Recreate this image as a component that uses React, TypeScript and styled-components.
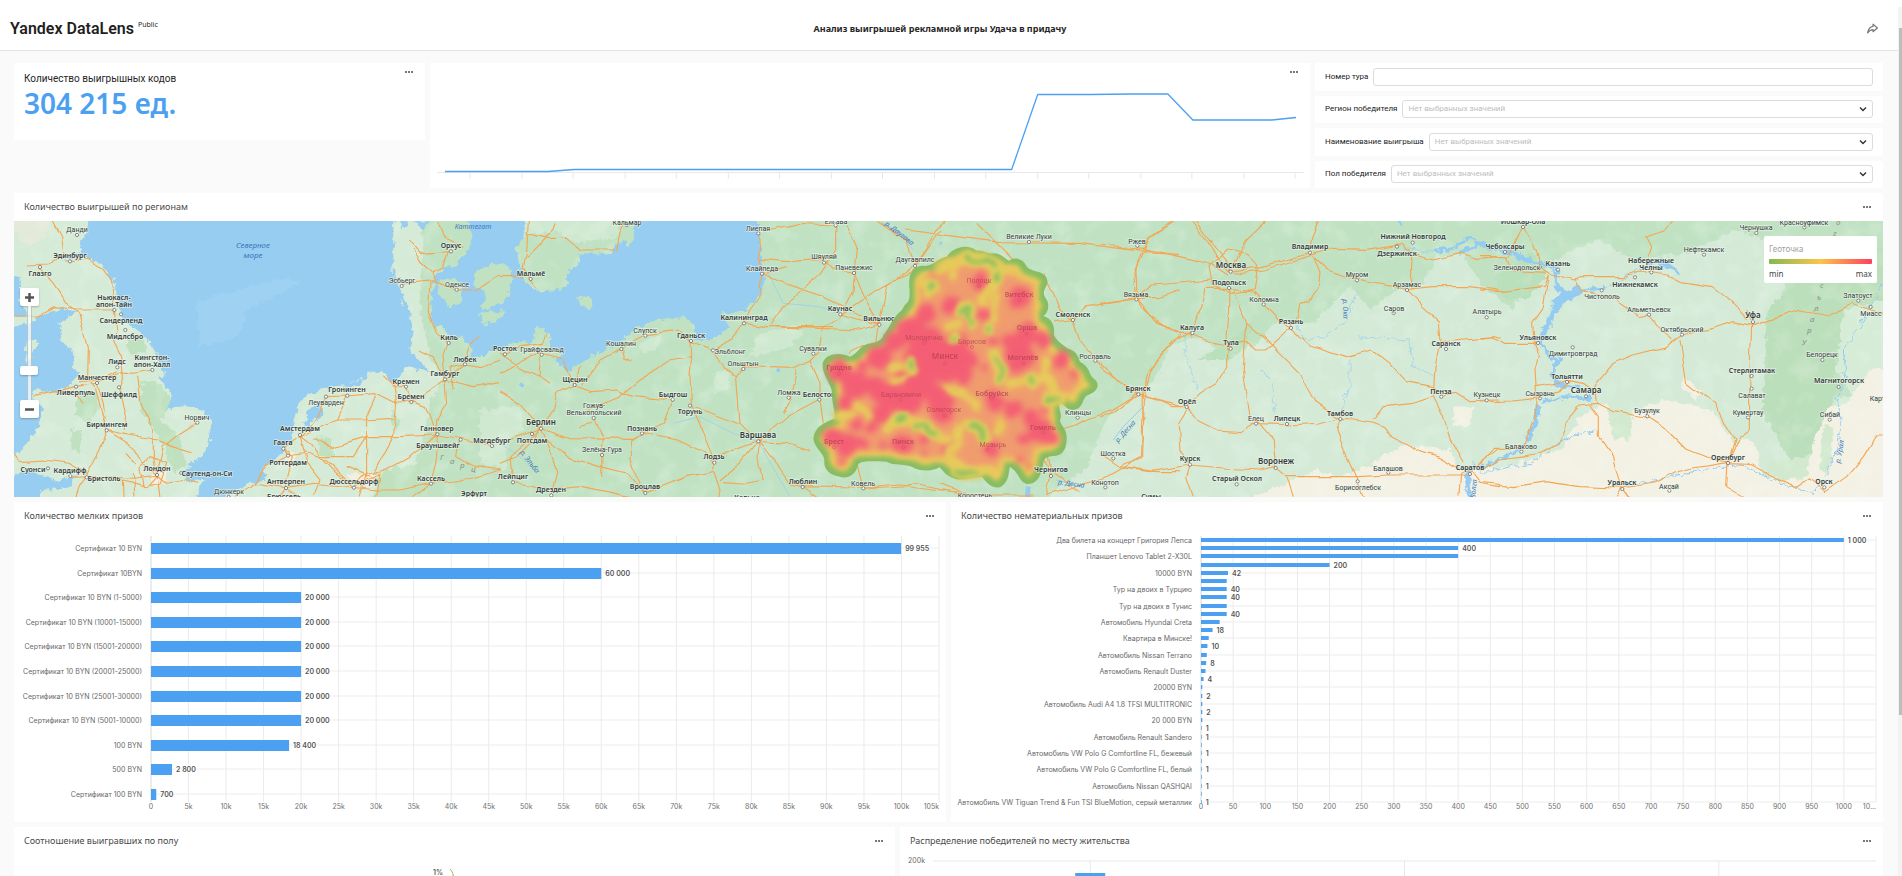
import React from "react";
import styled, { createGlobalStyle } from "styled-components";

const BLUE = "#4ba0f2";

const GlobalStyle = createGlobalStyle`
  *, *::before, *::after { box-sizing: border-box; }
  body { margin: 0; background: #fafafa; color: #333; font-family: "Noto Sans", sans-serif; }
`;

/* ---------- page frame ---------- */

const Page = styled.div`
  display: flex;
  height: 100vh;
  overflow: hidden;
`;

const Content = styled.div`
  flex: 1;
  min-width: 0;
`;

const Track = styled.div`
  width: 4px;
  padding: 28px 0 0 1px;
  background: linear-gradient(#fff 7px, #f3f3f3 7px);
`;

const Thumb = styled.div`
  height: 81%;
  background: #bdbdbd;
`;

const Header = styled.header`
  display: grid;
  grid-template-columns: 1fr auto 1fr;
  align-items: center;
  height: 51px;
  padding: 7px 16px 0 10px;
  background: #fff;
  border-bottom: 1px solid #e3e3e3;
`;

const Logo = styled.a`
  display: flex;
  gap: 4px;
  align-items: flex-start;
  color: #1f1f1f;
  font: 600 16px/20px Roboto, sans-serif;
  text-decoration: none;
`;

const LogoTag = styled.span`
  font: 400 7px/12px "Noto Sans", sans-serif;
`;

const PageTitle = styled.h1`
  margin: 0;
  padding-right: 12px;
  font-size: 9px;
  line-height: 12px;
  font-weight: 700;
  color: #262626;
`;

const IconButton = styled.button`
  display: grid;
  place-items: center;
  padding: 0;
  border: 0;
  background: none;
  color: #777;
  cursor: pointer;
`;

const ShareButton = styled(IconButton)`
  justify-self: end;
  width: 20px;
  height: 20px;
`;

const Board = styled.main`
  display: flex;
  flex-direction: column;
  gap: 5px;
  padding: 12px 15px 0 14px;
`;

const BoardRow = styled.div<{ $columns: string }>`
  display: grid;
  grid-template-columns: ${(p) => p.$columns};
  gap: 5px;
  align-items: start;
`;

const Card = styled.section`
  position: relative;
  min-width: 0;
  background: #fff;
`;

const CardHeader = styled.div`
  display: flex;
  align-items: center;
  justify-content: space-between;
  height: 28px;
  padding: 0 10px;
`;

const CardTitle = styled.h2`
  margin: 0;
  font-size: 9px;
  line-height: 12px;
  font-weight: 400;
  color: #4a4a4a;
`;

const MenuButton = styled(IconButton)`
  width: 12px;
  height: 12px;
`;

const CornerMenu = styled(MenuButton)`
  position: absolute;
  top: 3px;
  right: 10px;
`;

/* ---------- indicator and trend ---------- */

const Indicator = styled(Card)`
  height: 77px;
  padding: 10px;
`;

const IndicatorLabel = styled.div`
  font: 400 10px/12px Roboto, sans-serif;
  color: #262626;
`;

const IndicatorValue = styled.div`
  font-size: 28px;
  line-height: 36px;
  font-weight: 600;
  color: ${BLUE};
`;

const Trend = styled(Card)`
  height: 125px;
`;

const TrendPlot = styled.svg`
  display: block;
  width: 100%;
  height: 125px;
`;

/* ---------- filters ---------- */

const Filters = styled.form`
  display: flex;
  flex-direction: column;
  gap: 5px;
  height: 125px;
`;

const FilterRow = styled.div`
  display: flex;
  flex: 1;
  align-items: center;
  gap: 5px;
  padding: 0 10px;
  background: #fff;
`;

const FilterLabel = styled.label`
  font: 400 8px/12px Roboto, sans-serif;
  color: #222;
`;

const Field = styled.div`
  position: relative;
  display: flex;
  flex: 1;
`;

const TextInput = styled.input`
  width: 100%;
  height: 18px;
  padding: 0 5px;
  border: 1px solid #dcdcdc;
  border-radius: 3px;
  background: #fff;
  font: 400 8px/12px Roboto, sans-serif;
`;

const Select = styled.select`
  width: 100%;
  height: 18px;
  padding: 0 20px 0 5px;
  border: 1px solid #dcdcdc;
  border-radius: 3px;
  background: #fff;
  color: #bcbcbc;
  font: 400 8px/12px Roboto, sans-serif;
  appearance: none;
`;

const Chevron = styled.svg`
  position: absolute;
  top: 5px;
  right: 6px;
  width: 8px;
  height: 8px;
  pointer-events: none;
`;

/* ---------- map ---------- */

const MapBox = styled.div`
  position: relative;
  height: 276px;
  overflow: hidden;
`;

const MapSvg = styled.svg`
  display: block;
  width: 100%;
  height: 100%;
`;

const ZoomControl = styled.div`
  position: absolute;
  top: 67px;
  left: 6px;
  display: flex;
  flex-direction: column;
  align-items: center;
  width: 19px;
`;

const ZoomButton = styled(IconButton)`
  width: 19px;
  height: 18px;
  border-radius: 2px;
  background: #fff;
  box-shadow: 0 1px 2px rgba(0, 0, 0, 0.25);
  color: #555;
`;

const ZoomRail = styled.div`
  width: 5px;
  height: 94px;
  padding-top: 60px;
  background: rgba(255, 255, 255, 0.7);
  border: solid rgba(120, 140, 150, 0.45);
  border-width: 0 1px;
`;

const ZoomHandle = styled.div`
  width: 18px;
  height: 9px;
  margin-left: -8px;
  border-radius: 2px;
  background: #fff;
  box-shadow: 0 1px 2px rgba(0, 0, 0, 0.25);
`;

const Legend = styled.div`
  position: absolute;
  top: 15px;
  right: 6px;
  width: 113px;
  padding: 7px 5px 3px;
  border-radius: 2px;
  background: #fff;
  font-size: 8px;
  line-height: 12px;
  color: #444;
`;

const LegendTitle = styled.div`
  color: #a0a0a0;
`;

const LegendScale = styled.div`
  height: 5px;
  margin: 4px 0;
  border-radius: 1px;
  background: linear-gradient(90deg, #84b850, #fcc54a 50%, #fd3f5c);
`;

const LegendEnds = styled.div`
  display: flex;
  justify-content: space-between;
`;

/* ---------- charts ---------- */

const ChartBody = styled.div<{ $labels: number; $height: number }>`
  height: ${(p) => p.$height}px;
  padding: 6px 7px 0 ${(p) => p.$labels}px;
`;

const Plot = styled.svg`
  display: block;
  width: 100%;
  height: 264px;
  overflow: visible;
  font-family: Inter, sans-serif;
  font-size: 7px;
`;

const Dots = () => (
  <svg width="8" height="4" viewBox="0 0 8 4" fill="currentColor" aria-hidden="true">
    <rect x="0" y="1" width="2" height="2" />
    <rect x="3" y="1" width="2" height="2" />
    <rect x="6" y="1" width="2" height="2" />
  </svg>
);

const TitledHeader = ({ title }: { title: string }) => (
  <CardHeader>
    <CardTitle>{title}</CardTitle>
    <MenuButton type="button" aria-label="Меню"><Dots /></MenuButton>
  </CardHeader>
);

type Bar = { label?: string; value: number; text?: string };

type BarChartProps = {
  bars: Bar[];
  max: number;
  ticks: { value: number; text: string }[];
  first: number;
  last: number;
  thickness: number;
};

function BarChart({ bars, max, ticks, first, last, thickness }: BarChartProps) {
  const rowY = (i: number) => Math.round(first + (i * (last - first)) / (bars.length - 1));
  const share = (v: number) => `${(v / max) * 100}%`;
  return (
    <Plot role="img">
      {bars.map((b, i) =>
        b.label ? <line key={i} x1="0" x2="100%" y1={rowY(i)} y2={rowY(i)} stroke="#ededed" /> : null
      )}
      {ticks.map((t, i) => {
        const end = i === ticks.length - 1;
        const x = end ? "100%" : share(t.value);
        return (
          <g key={t.value}>
            <line x1={x} x2={x} y1="0" y2="266" stroke={i ? "#ebebeb" : "#d8d8d8"} />
            <text x={x} y="273" fill="#707070" textAnchor={end ? "end" : "middle"}>{t.text}</text>
          </g>
        );
      })}
      {bars.map((b, i) => (
        <g key={i}>
          <rect x="0" y={rowY(i) - Math.floor(thickness / 2)} width={share(b.value)} height={thickness} fill={BLUE} />
          {b.label && (
            <text x="-9" y={rowY(i) + 3} fill="#686868" textAnchor="end">{b.label}</text>
          )}
          {b.text && (
            <text x={share(b.value)} dx="4" y={rowY(i) + 3} fill="#555" fontWeight="600" stroke="#fff" strokeWidth="2" paintOrder="stroke">
              {b.text}
            </text>
          )}
        </g>
      ))}
    </Plot>
  );
}

const smallPrizes: Bar[] = [
  { label: "Сертификат 10 BYN", value: 99955, text: "99 955" },
  { label: "Сертификат 10BYN", value: 60000, text: "60 000" },
  { label: "Сертификат 10 BYN (1-5000)", value: 20000, text: "20 000" },
  { label: "Сертификат 10 BYN (10001-15000)", value: 20000, text: "20 000" },
  { label: "Сертификат 10 BYN (15001-20000)", value: 20000, text: "20 000" },
  { label: "Сертификат 10 BYN (20001-25000)", value: 20000, text: "20 000" },
  { label: "Сертификат 10 BYN (25001-30000)", value: 20000, text: "20 000" },
  { label: "Сертификат 10 BYN (5001-10000)", value: 20000, text: "20 000" },
  { label: "100 BYN", value: 18400, text: "18 400" },
  { label: "500 BYN", value: 2800, text: "2 800" },
  { label: "Сертификат 100 BYN", value: 700, text: "700" },
];

const smallTicks = Array.from({ length: 22 }, (_, i) => ({ value: i * 5000, text: i ? `${i * 5}k` : "0" }));

const bigPrizes: Bar[] = [
  { label: "Два билета на концерт Григория Лепса", value: 1000, text: "1 000" },
  { value: 400, text: "400" },
  { label: "Планшет Lenovo Tablet 2-X30L", value: 400 },
  { value: 200, text: "200" },
  { label: "10000 BYN", value: 42, text: "42" },
  { value: 40 },
  { label: "Тур на двоих в Турцию", value: 40, text: "40" },
  { value: 40, text: "40" },
  { label: "Тур на двоих в Тунис", value: 40 },
  { value: 40, text: "40" },
  { label: "Автомобиль Hyundai Creta", value: 29 },
  { value: 18, text: "18" },
  { label: "Квартира в Минске!", value: 12 },
  { value: 10, text: "10" },
  { label: "Автомобиль Nissan Terrano", value: 9 },
  { value: 8, text: "8" },
  { label: "Автомобиль Renault Duster", value: 7 },
  { value: 4, text: "4" },
  { label: "20000 BYN", value: 2 },
  { value: 2, text: "2" },
  { label: "Автомобиль Audi A4 1.8 TFSI MULTITRONIC", value: 2 },
  { value: 2, text: "2" },
  { label: "20 000 BYN", value: 2 },
  { value: 1, text: "1" },
  { label: "Автомобиль Renault Sandero", value: 1, text: "1" },
  { value: 1 },
  { label: "Автомобиль VW Polo G Comfortline FL, бежевый", value: 1, text: "1" },
  { value: 1 },
  { label: "Автомобиль VW Polo G Comfortline FL, белый", value: 1, text: "1" },
  { value: 1 },
  { label: "Автомобиль Nissan QASHQAI", value: 1, text: "1" },
  { value: 1 },
  { label: "Автомобиль VW Tiguan Trend & Fun TSI BlueMotion, серый металлик", value: 1, text: "1" },
];

const bigTicks = Array.from({ length: 22 }, (_, i) => ({ value: i * 50, text: i === 21 ? "10…" : String(i * 50) }));

/* ---------- map data: five sheets drawn at triple scale ---------- */

type Sheet = { dx: number; dy: number };
const NORTH_SEA: Sheet = { dx: -14, dy: -31 };
const BALTIC: Sheet = { dx: 486, dy: -11 };
const BELARUS: Sheet = { dx: 766, dy: -11 };
const CENTRE: Sheet = { dx: 1086, dy: -11 };
const VOLGA: Sheet = { dx: 1466, dy: -11 };

const place = (s: Sheet) => `translate(${s.dx} ${s.dy}) scale(0.3333)`;

/* x, y of the label, name, rank (0 town, 1 city, 2 capital), dot offset */
type City = [number, number, string, number, number, number];

const northSea: City[] = [
  [231, 117, "Данди", 0, 0, 18], [210, 195, "Эдинбург", 1, 0, 19], [120, 250, "Глазго", 1, 0, -19],
  [343, 321, "Ньюкасл-", 1, 0, 0], [343, 342, "апон-Тайн", 1, 0, 18], [363, 390, "Сандерленд", 1, 0, -17],
  [376, 438, "Мидлсбро", 1, 0, -18], [352, 513, "Лидс", 1, 0, 19], [457, 500, "Кингстон-", 1, 0, 0],
  [457, 522, "апон-Халл", 1, 0, 18], [291, 560, "Манчестер", 1, 0, 19], [228, 607, "Ливерпуль", 1, 0, -17],
  [357, 611, "Шеффилд", 1, 0, -19], [320, 701, "Бирмингем", 1, 0, 20], [592, 680, "Норвич", 0, 0, 18],
  [471, 835, "Лондон", 1, 0, 20], [100, 836, "Суонси", 1, 44, -1], [211, 839, "Кардифф", 1, 0, 19],
  [313, 863, "Бристоль", 1, -53, -1], [621, 850, "Саутенд-он-Си", 1, -77, -1], [686, 903, "Дюнкерк", 0, 0, 18],
  [1353, 166, "Орхус", 1, 0, 18], [1205, 270, "Эсбьерг", 0, 0, 18], [1370, 281, "Оденсе", 0, 0, 18],
  [1346, 440, "Киль", 1, 0, 19], [1395, 506, "Любек", 1, 0, 17], [1335, 548, "Гамбург", 1, 0, 20],
  [1218, 572, "Кремен", 1, 0, 18], [1234, 618, "Бремен", 1, 0, 18], [1042, 598, "Гронинген", 1, 0, 19],
  [978, 637, "Леуварден", 0, 0, -17], [900, 715, "Амстердам", 1, 0, 20], [850, 757, "Гаага", 1, 0, 19],
  [864, 816, "Роттердам", 1, 0, -19], [858, 874, "Антверпен", 1, 0, 20], [852, 918, "Брюссель", 1, 0, 0],
  [1062, 872, "Дюссельдорф", 1, 0, 21], [1312, 715, "Ганновер", 1, 0, 18], [1315, 766, "Брауншвейг", 1, 67, -17],
  [1476, 749, "Магдебург", 1, 0, 19], [1293, 864, "Кассель", 1, 0, 17], [1422, 908, "Эрфурт", 1, 0, 0],
];

const baltic: City[] = [
  [92, 189, "Мальмё", 1, 0, 18], [775, 55, "Лиепая", 0, 0, 15], [786, 173, "Клайпеда", 0, 0, 18],
  [380, 36, "Кальмар", 0, 0, 9], [1007, 33, "Елгава", 0, 0, 13], [732, 322, "Калининград", 1, 0, 18],
  [436, 359, "Слупск", 0, 0, 18], [364, 399, "Кошалин", 0, 0, 18], [573, 374, "Гданьск", 1, 0, 19],
  [690, 423, "Эльблонг", 0, -51, -2], [730, 459, "Ольштын", 0, 0, 18], [940, 413, "Сувалки", 0, 0, 18],
  [15, 415, "Росток", 1, 0, 18], [125, 417, "Грайфсвальд", 0, 0, 17], [224, 507, "Щецин", 1, 0, 18],
  [281, 586, "Гожув-", 0, 0, 0], [281, 607, "Велькопольский", 0, 0, 17], [518, 551, "Быдгош", 1, 0, 18],
  [570, 603, "Торунь", 1, 0, -16], [866, 547, "Ломжа", 0, 0, 16], [958, 551, "Белосток", 1, 0, 18],
  [123, 635, "Берлин", 2, 0, 21], [96, 690, "Потсдам", 1, 0, -18], [426, 653, "Познань", 1, 0, 17],
  [306, 717, "Зелёна-Гура", 0, 0, 18], [775, 674, "Варшава", 2, 0, 20], [643, 739, "Лодзь", 1, 0, 19],
  [39, 799, "Лейпциг", 1, 0, 18], [154, 838, "Дрезден", 1, 0, 18], [436, 829, "Вроцлав", 1, 0, 20],
  [908, 813, "Люблин", 1, 0, 18], [742, 861, "Кельце", 1, 0, 0], [972, 138, "Шяуляй", 0, 0, 20],
  [1062, 171, "Паневежис", 0, 0, 18], [1245, 148, "Даугавпилс", 0, 0, 20], [1021, 293, "Каунас", 1, 0, 20],
  [1138, 325, "Вильнюс", 1, 0, 19], [1090, 820, "Ковель", 0, 0, 15],
];

const belarus: City[] = [
  [747, 78, "Великие Луки", 0, 0, 18], [879, 312, "Смоленск", 1, 0, 18], [946, 437, "Рославль", 0, 0, 15],
  [893, 606, "Клинцы", 0, 0, 17], [586, 855, "Коростень", 0, 0, 0],
  [976, 815, "Конотоп", 0, 0, 17], [1000, 730, "Шостка", 0, 0, 15],
];

const overHeat: City[] = [[813, 778, "Чернигов", 1, 0, 20]];

const heatCities: City[] = [
  [597, 209, "Полоцк", 0, 0, 18], [718, 253, "Витебск", 1, 0, 18], [740, 352, "Орша", 1, 0, 18],
  [433, 381, "Молодечно", 0, 0, 18], [576, 393, "Борисов", 0, 0, 18], [495, 439, "Минск", 2, 0, 21],
  [730, 442, "Могилёв", 1, 0, 18], [177, 471, "Гродно", 1, 0, 20], [362, 551, "Барановичи", 0, 0, 18],
  [636, 548, "Бобруйск", 1, 0, 18], [493, 598, "Солигорск", 0, 0, 18], [790, 650, "Гомель", 1, 0, 18],
  [163, 694, "Брест", 1, 0, 18], [370, 694, "Пинск", 1, 0, 18], [640, 701, "Мозырь", 0, -18, 18],
];

const centre: City[] = [
  [112, 92, "Ржев", 0, 0, 15], [392, 164, "Москва", 2, 0, 21], [387, 215, "Подольск", 1, 0, 19],
  [630, 108, "Владимир", 1, 0, 20], [938, 77, "Нижний Новгород", 1, 0, 21], [891, 129, "Дзержинск", 1, 0, -19],
  [771, 192, "Муром", 0, 0, 19], [921, 221, "Арзамас", 0, 0, 19], [109, 252, "Вязьма", 0, 0, 16],
  [491, 267, "Коломна", 0, 0, 16], [573, 334, "Рязань", 1, 0, 20], [881, 293, "Саров", 0, 0, 16],
  [277, 350, "Калуга", 1, 0, 19], [392, 397, "Тула", 1, 0, 19], [1038, 398, "Саранск", 1, 0, 19],
  [1160, 304, "Алатырь", 0, 0, 18], [115, 533, "Брянск", 1, 0, 20], [260, 573, "Орёл", 1, 0, 18],
  [1024, 542, "Пенза", 1, 0, 18], [1160, 553, "Кузнецк", 0, 0, 18], [468, 624, "Елец", 0, 0, 17],
  [561, 623, "Липецк", 1, 0, 19], [721, 609, "Тамбов", 1, 0, 18], [270, 744, "Курск", 1, 0, 20],
  [527, 752, "Воронеж", 2, 0, 22], [410, 804, "Старый Оскол", 1, 0, 19], [773, 830, "Борисоглебск", 0, 0, -16],
  [865, 773, "Балашов", 0, 0, 15], [1110, 772, "Саратов", 1, 0, 20], [154, 857, "Сумы", 1, 0, 0],
];

const volga: City[] = [
  [129, 33, "Йошкар-Ола", 1, 0, 18], [75, 107, "Чебоксары", 1, 0, 19], [112, 172, "Зеленодольск", 0, 68, -2],
  [234, 159, "Казань", 1, 0, 20], [514, 149, "Набережные", 1, 0, 0], [514, 170, "Челны", 1, 0, 17],
  [465, 221, "Нижнекамск", 1, 0, -19], [672, 116, "Нефтекамск", 0, 0, 18], [829, 52, "Чернушка", 0, 0, 17],
  [973, 36, "Красноуфимск", 0, 0, 16], [365, 259, "Чистополь", 0, 0, -18], [507, 296, "Альметьевск", 0, 0, 18],
  [606, 356, "Октябрьский", 0, 0, 18], [819, 316, "Уфа", 2, 0, 20], [1135, 254, "Златоуст", 0, 0, 18],
  [1172, 309, "Миасс", 0, 0, -18], [174, 381, "Ульяновск", 1, 0, 18], [278, 430, "Димитровград", 0, 0, -18],
  [1027, 433, "Белорецк", 0, 0, 17], [261, 498, "Тольятти", 1, 0, 18], [318, 539, "Самара", 2, 0, 20],
  [180, 548, "Сызрань", 0, 0, 17], [815, 479, "Стерлитамак", 1, 0, 19], [1076, 511, "Магнитогорск", 1, 0, 20],
  [815, 554, "Салават", 0, 0, -18], [502, 601, "Бузулук", 0, 0, 18], [804, 605, "Кумертау", 0, 0, 17],
  [1049, 612, "Сибай", 0, 0, 17], [124, 708, "Балаково", 0, 0, 17], [744, 740, "Оренбург", 1, 0, 19],
  [427, 817, "Уральск", 1, 0, 20], [568, 827, "Аксай", 0, 0, 15], [1033, 814, "Орск", 1, 0, 18],
  [1212, 563, "Карталы", 0, 0, 0],
];

const northSeaRoads =
  "M160 93 185 140 192 200 150 222 80 225M192 213 260 208 310 235 335 280 343 350M120 235 160 280 200 340 236 372 250 420 262 480 260 560 285 590 320 720" +
  "M42 375 120 375 160 350 236 360 343 360 350 420 340 450 365 500 370 560 358 592 375 660 370 720M457 540 400 550 365 545 291 580 228 590 100 620" +
  "M350 545 300 570 240 575M410 560 420 640 460 720 460 800 471 855M291 580 310 640 320 720 380 735 450 745 520 770 580 790M320 720 400 770 430 820 471 855" +
  "M320 720 300 780 262 850 235 890 225 920M592 697 540 730 490 770 470 855M471 855 400 865 300 860 215 862 M471 855 500 880 560 870 595 880M471 855 440 890 370 870 372 920M471 855 480 920M400 850 405 920" +
  "M42 790 60 815 130 810 210 820 262 850M450 800 500 820 480 880 430 890 420 840ZM250 640 225 600M375 790 410 830" +
  "M1312 93 1330 140 1390 170M1225 150 1260 190 1350 185M1345 185 1330 230 1300 245 1260 210 1240 180M1300 245 1300 275 1205 285M1300 275 1370 300 1430 300 1500 255M1290 280 1285 370 1310 430 1346 460 1330 500 1335 568" +
  "M1395 522 1335 568 1234 635 1190 640 1130 610 1042 618 978 620M1395 522 1440 530 1500 510M1335 568 1420 590 1500 575M1335 568 1340 640 1310 690 1312 735 1380 745 1476 768M1234 635 1280 650 1312 735M1234 635 1218 590" +
  "M1218 590 1180 590 1150 560M1042 618 1010 690 920 730 900 735M900 735 940 700 978 620M900 735 850 775 864 798 920 790 980 810 1062 890M900 735 930 760 960 800 1060 800 1100 740 1200 740 1312 735" +
  "M850 775 880 800 858 893 840 920M864 798 800 830 750 890 700 920M858 893 940 880 1062 892 1100 850 1160 840 1230 800 1312 735M1062 892 1010 850 970 810M1062 892 1130 900 1200 900 1293 880 1310 800 1312 735" +
  "M1100 740 1100 860 1080 920M1190 640 1180 740 1120 850M1130 610 1100 680 1100 740 1000 770 940 745M1010 690 1090 690 1180 685M1062 892 1140 850 1130 920M1293 880 1240 920M1293 880 1400 870 1500 840M1380 745 1370 800 1430 830 1500 840M900 735 920 820 960 870 940 920M760 880 858 893 900 920M1040 830 1140 870M1180 575 1190 640M1260 480 1300 500 1335 568M1360 600 1350 530 1395 522 1410 470 1440 440";

const balticRoads =
  "M85 33 80 120 70 170 92 207M80 70 140 85 200 85 240 120 350 120 360 70 380 33M80 140 160 60 170 33M70 200 0 200M92 207 110 230" +
  "M775 70 780 130 786 190 780 250 750 300 732 340M786 148 860 155 972 148 1000 180 1062 190M786 190 850 220 970 260 1138 343M786 190 860 170M732 340 800 350 960 355 1080 360 1138 343M810 345 850 290 960 190 1007 120 1007 45M1007 45 900 40 800 60" +
  "M1062 190 1060 240 1021 313 1080 330 1138 343M1062 190 1090 260 1138 343 1160 230 1245 167M1040 45 1070 110 1062 190M1021 313 970 355 960 420 930 450 960 520 960 570M1138 343 1130 390 1050 430M1245 167 1320 60M1245 167 1215 90 1130 33" +
  "M1021 313 1100 260 1245 180M732 340 690 390 640 420 575 395 530 360 500 365 436 375 364 415 300 450 245 525M364 415 370 440 395 450M573 390 575 440 570 500 575 585 640 740M573 440 510 450 420 510 360 560 290 590 245 610" +
  "M224 525 270 545 350 540 400 560 518 570M224 525 170 550 160 600 123 655M224 525 240 470M640 420 670 480 710 500 720 640 775 694M710 500 730 470 880 475 930 450M570 585 640 610 720 640M890 480 870 570 850 610M775 694 860 620 958 568 M775 694 650 740 640 780 660 840 655 870" +
  "M775 694 720 760 660 810M775 694 770 760 790 810 740 820 670 815M775 694 840 780 870 820 908 830M775 694 860 700 930 720M518 570 490 640 426 670 395 690 390 750 436 850M426 670 400 685 200 683 123 655M426 670 530 690 620 730 643 758" +
  "M123 655 60 580 0 545M0 430 60 470 123 500 150 520M123 655 90 700 50 740 0 760M123 655 150 720 170 790 154 855M123 655 0 700M436 850 380 790 300 770 200 740 140 690M436 850 560 800 640 785M39 817 154 838 250 830 390 860M39 817 30 740 123 655M281 625 310 680 306 735 305 800M235 650 280 640M0 490 90 440 125 432 120 500 M800 350 1000 350" +
  "M908 830 1090 835 1200 825 1400 850M908 830 960 870M1090 835 1070 760M15 433 60 410 130 400 140 370M125 432 190 450 224 525M960 570 970 640";

const belarusRoads =
  "M380 60 530 80 660 98 900 100 1090 125 1200 130M405 167 470 60 500 33M590 40 700 150 740 170M790 190 840 300 879 330M820 335 879 330 920 290 1069 266 1140 262 1200 240M879 330 900 390 946 450 1010 510 1075 553 1200 590" +
  "M1200 375 1130 450 1100 500 1090 560 1085 740 1030 770 960 810 800 855M1075 553 1000 600 930 625 890 645 820 665M790 745 813 798 800 855M813 798 800 730M813 778 900 845M1090 125 1065 180 1069 266 1130 340 1200 370M1090 125 1110 80 1180 33M1030 770 1120 785 1200 785M250 835 420 825 540 850M480 820 560 855 760 855";

const centreRoads =
  "M0 105 130 115 240 140 340 165 387 195M140 90 225 33M140 90 105 190 109 266 150 320 230 370 277 370M0 280 109 266 160 225 340 210M275 33 320 90 350 140 387 185M285 33 345 110 395 170M387 185 440 90 500 33M387 185 480 170 560 150 630 130M400 190 490 180 560 160 700 115 800 118 910 100M630 130 635 80 655 33" +
  "M630 130 680 180 771 210 921 238 1000 230 1110 230 1200 240M640 140 660 190 655 230 630 275 600 280 590 330 573 350M910 100 935 130 935 238M930 130 1000 150 1080 130 1130 145 1200 140M330 170 380 120 440 130 470 165 460 240 390 250 340 225ZM387 235 450 240 490 283 540 335 573 353M387 235 320 235 300 300 277 350" +
  "M387 235 385 330 380 400 380 470 350 520 300 550 260 590M400 235 440 340 520 410 600 490 650 580 720 628M440 340 430 480 450 620 478 640M260 370 190 420 150 490 130 570 125 740 60 770M277 375 340 400 392 410M260 370 277 385M392 405 440 395 470 420 500 420 573 353 630 405 740 440 820 420 870 460 920 515 1000 530 1024 558" +
  "M0 470 50 510 115 553 160 565 220 590 260 590M115 553 40 610 0 620M260 590 290 630 350 660 420 665 460 640 570 645 650 640 710 625M260 600 235 640 240 720 270 765M0 730 60 770 150 785 270 765 380 775 480 780 527 770M270 765 260 800 280 860M478 640 520 690 527 770 560 800 580 860M560 800 773 800 865 795 1100 795M720 628 710 660 740 740 773 813 790 860" +
  "M720 628 760 630 820 640 860 655 880 685 950 720 1010 740 1080 780M820 630 850 590 940 580 1000 560M921 238 970 290 1015 330 1020 400 1005 470 1000 560 1030 620 1050 690 1090 760M1020 400 1060 390 1180 380 1200 385M1024 555 1070 550 1110 575 1200 573M1080 860 1085 790 1110 780 1160 740 1200 710M1110 780 1140 820 1200 830";

const volgaRoads =
  "M0 140 75 140 100 185 200 190M129 50 170 120 180 170 210 190 280 210 300 200 430 200 480 180 560 195 600 215 700 230 740 260 800 330M500 170 515 110 500 80 560 60 578 35M129 50 80 140M0 240 60 245 190 230 205 195 190 290 155 340 160 400 175 440 165 480 170 560 160 630 125 725" +
  "M285 205 310 245 400 265 480 320 505 315 545 365 580 385 M606 375 700 355 760 335 819 347 900 320 960 300 1050 315 1120 280 1170 300 1208 310M606 375 575 395 560 410 460 435 400 460 350 520 340 540M600 390 620 520 670 560 710 580 730 640 765 690 744 760M815 347 810 480 808 660 780 680 744 760M819 347 800 300" +
  "M0 385 40 380 70 400 160 400M170 530 225 520 261 512 310 520 345 545 350 580 300 585 270 620 235 700 170 735 60 750 0 780M330 585 355 620 355 680 400 740 427 835 445 860M350 580 400 605 502 622 560 660 620 720 680 745 744 755M0 820 100 830 200 815 300 830 427 835 520 820 600 780 744 758 740 830 790 860" +
  "M744 758 800 760 880 800 945 835 990 805 1035 845 1100 800 1150 740 1190 675 1208 675M0 573 100 570 180 560 240 545 265 515M0 760 40 715 124 715 M427 835 410 862M427 835 445 862";

const heatOutline =
  "M500 140C520 112 560 100 590 122 608 118 622 134 640 130 665 130 675 148 688 152 705 138 732 148 740 170 760 190 798 178 803 215 800 235 785 240 795 262 812 280 805 310 790 318 815 325 825 345 822 375 828 390 845 402 862 415 895 425 895 445 900 455 930 470 925 490 940 505 962 520 955 545 925 555 905 560 915 595 880 600 860 600 855 585 842 578 830 595 850 610 840 630 840 645 860 655 860 680 862 710 850 740 820 738 800 740 790 745 790 760 785 790 775 825 740 822 715 815 720 790 690 770 685 785 690 815 660 832 630 835 620 815 605 800 580 800 560 812 530 808 495 800 490 780 478 772 460 785 420 785 395 770 370 760 340 768 320 755 290 755 250 750 235 762 230 790 205 810 180 800 150 795 130 780 133 750 135 735 100 710 100 685 105 650 130 640 165 625 165 600 155 580 155 540 145 510 125 490 128 460 135 430 180 425 210 440 235 430 240 405 265 402 290 400 310 385 310 375 325 360 335 330 355 310 370 300 370 285 382 278 395 260 385 230 388 210 390 180 410 165 435 168 460 165 475 145 500 140Z";

const hotSpots = [
  [597, 218, 28], [720, 265, 36], [515, 282, 26], [435, 312, 30], [395, 365, 42], [610, 312, 18], [345, 395, 32],
  [740, 370, 34], [790, 388, 24], [440, 400, 52], [490, 450, 64], [550, 450, 38], [530, 400, 34], [410, 440, 36],
  [300, 440, 36], [180, 485, 36], [230, 525, 40], [290, 535, 32], [195, 578, 24], [340, 565, 44], [420, 520, 50],
  [480, 570, 40], [250, 470, 18], [550, 500, 26], [720, 440, 46], [690, 400, 26], [842, 452, 24], [880, 495, 18],
  [640, 572, 32], [700, 595, 30], [490, 612, 28], [390, 580, 34], [300, 612, 28], [232, 645, 18], [280, 650, 20],
  [785, 668, 38], [815, 685, 24], [735, 690, 22], [155, 680, 28], [200, 705, 36], [250, 695, 18],
  [310, 700, 14], [370, 702, 30], [432, 688, 14], [500, 715, 12], [430, 730, 10], [635, 720, 20], [720, 745, 14],
  [742, 768, 10], [188, 758, 12], [755, 620, 24], [790, 602, 10], [452, 195, 8], [615, 470, 12], [640, 393, 16],
  [365, 498, 12],
];

const coolPaths =
  "M458 225 442 250M522 205 520 180M650 165 640 225 605 275M650 185 700 175M645 260 640 330M525 385 515 390M392 460 395 492 340 520M335 470 360 470M640 430 655 475 662 510M690 525 755 512 790 500 800 450M800 500 830 545 800 575 850 560M500 530 580 570 590 590M320 660 335 635 375 628 430 640 470 680 500 685M230 580 268 620M560 640 600 660 615 690M540 700 500 740 540 770M560 790 640 780M170 620 210 612M510 355 535 340M480 165 560 150 640 160M430 215 470 235M660 640 650 660M540 650 530 680";
const coldPaths =
  "M545 300 558 284 562 300 578 345M655 190 650 205M392 462 393 470M645 445 662 470 662 510M752 505 758 518M800 572 835 566M350 632 372 626M405 645 435 650 465 672M580 645 600 655 614 685M456 226 450 240M628 355 625 362M525 382 522 386M530 785 590 788M560 140 600 150 650 160";

function Cities({ sheet, cities, hot }: { sheet: Sheet; cities: City[]; hot?: boolean }) {
  return (
    <g fill={hot ? "#b3404f" : "#333a40"} opacity={hot ? 0.75 : 1}>
      {cities.map(([x, y, name, rank, ox, oy]) => {
        const cx = sheet.dx + Math.round(x / 3);
        const cy = sheet.dy + Math.round(y / 3);
        return (
          <g key={name}>
            {(ox !== 0 || oy !== 0) && (
              <circle
                cx={sheet.dx + (x + ox) / 3}
                cy={sheet.dy + (y + oy) / 3}
                r="1.6"
                fill={hot ? "none" : "#fff"}
                stroke={hot ? "#d05060" : "#6b6b6b"}
                strokeWidth="0.8"
              />
            )}
            <text
              x={cx}
              y={cy + 3}
              textAnchor="middle"
              fontFamily={rank ? "Noto Sans, sans-serif" : "Roboto, sans-serif"}
              fontSize={rank === 2 ? 8 : 7}
              fontWeight={rank ? 600 : 400}
              stroke={hot ? "none" : "#eef6ea"}
              strokeOpacity="0.7"
              strokeWidth="1.5"
              paintOrder="stroke"
            >
              {name}
            </text>
          </g>
        );
      })}
    </g>
  );
}

const Roads = ({ d }: { d: string }) => (
  <path d={d} fill="none" stroke="#f4a652" strokeWidth="3.4" strokeLinejoin="round" filter="url(#wobble)" />
);

const RegionMap = () => (
  <MapSvg viewBox="0 0 1869 276" preserveAspectRatio="xMidYMid slice" role="img" aria-label="Карта выигрышей">
    <defs>
      <filter id="wobble" x="-5%" y="-5%" width="110%" height="110%">
        <feTurbulence type="fractalNoise" baseFrequency="0.02" numOctaves="1" seed="4" />
        <feDisplacementMap in="SourceGraphic" scale="22" xChannelSelector="R" yChannelSelector="G" />
      </filter>
      <filter id="coast" x="-5%" y="-5%" width="110%" height="110%">
        <feTurbulence type="fractalNoise" baseFrequency="0.05" numOctaves="3" seed="9" />
        <feDisplacementMap in="SourceGraphic" scale="26" xChannelSelector="R" yChannelSelector="G" />
      </filter>
      <filter id="relief" x="0" y="0" width="100%" height="100%">
        <feTurbulence type="fractalNoise" baseFrequency="0.05" numOctaves="3" seed="7" />
        <feColorMatrix values="0 0 0 0 0.93  0 0 0 0 0.97  0 0 0 0 0.9  0 3 0 0 -1.5" />
      </filter>
      <filter id="warm"><feMorphology operator="erode" radius="14" /><feGaussianBlur stdDeviation="6" /></filter>
      <filter id="hot"><feMorphology operator="erode" radius="30" /><feGaussianBlur stdDeviation="9" /></filter>
      <filter id="soft" x="-10%" y="-10%" width="120%" height="120%">
        <feTurbulence type="fractalNoise" baseFrequency="0.025" numOctaves="1" seed="3" />
        <feDisplacementMap in="SourceGraphic" scale="36" xChannelSelector="R" yChannelSelector="G" />
        <feGaussianBlur stdDeviation="9" />
      </filter>
      <filter id="softer" x="-10%" y="-10%" width="120%" height="120%">
        <feTurbulence type="fractalNoise" baseFrequency="0.03" numOctaves="1" seed="3" />
        <feDisplacementMap in="SourceGraphic" scale="36" xChannelSelector="R" yChannelSelector="G" />
        <feGaussianBlur stdDeviation="6" />
      </filter>
    </defs>

    <rect width="1869" height="276" fill="#c0e2c3" />

    {/* Germany, the Low Countries, Britain: lighter plains */}
    <g transform={place(NORTH_SEA)} filter="url(#coast)">
      <path fill="#d5ebd7" d="M-60 60H1270L1260 350 1290 500 1330 560 1290 640 1270 760 1230 860 1200 990H-60Z" />
      <path fill="#bfe1bf" d="M420 580 470 570 520 640 480 690 540 740 560 820 520 850 490 770 450 700 420 660ZM230 620 290 610 300 660 260 700 225 670ZM380 440 430 450 440 490 390 490ZM210 720 250 720 240 790 215 780ZM950 740 990 740 1000 800 960 800ZM1170 640 1200 700 1180 720ZM1150 840 1260 820 1270 990 1090 990Z" />
      <path fill="#eeeadb" d="M42 90 160 90 130 140 90 170 42 130Z" opacity="0.6" />
      <path fill="#f4efdf" d="M450 845 490 840 500 880 455 885ZM1040 850 1130 850 1110 890 1050 880ZM860 790 890 790 880 830 860 825Z" />
    </g>
    <g transform={place(BALTIC)} filter="url(#coast)">
      <path fill="#d3ead3" d="M780 370 880 350 910 370 870 410 800 430 750 440ZM650 490 690 480 680 540 640 550ZM420 400 490 370 470 420 430 430ZM60 0 380 0 350 80 230 100 160 60 80 80ZM-60 600 60 590 70 660 20 700 20 780-60 760Z" opacity="0.8" />
    </g>
    {/* Russian steppe and the southern dry lands */}
    <g transform={place(CENTRE)} filter="url(#coast)">
      <path fill="#d4ead7" d="M-300 990-120 830-40 770 30 610 110 560 170 500 210 410 300 380 380 440 470 400 540 330 640 340 690 290 750 230 810 300 880 240 960 230 1010 140 1090 130 1140 220 1240 300 1300 200 1400 130 1500 90 1600 150 1760 130 1900 60 2000 90 2060 200 2020 400 2100 560 2400 560V990Z" />
      <path fill="#b9dfbb" d="M290 450 370 410 460 330 440 410 380 450ZM1180 200 1300 130 1340 190 1280 270 1220 270Z" />
      <path fill="#bcdfbb" d="M2000 300 2100 210 2240 130 2400 100V420L2280 440 2200 560 2190 700 2080 760 1990 620Z" />
      <path fill="#d6ecd6" d="M2230 300 2400 260V520L2260 560 2210 480Z" />
      <path fill="#f3f1e4" d="M420 990 440 870 560 820 650 780 690 800 760 790 850 740 920 705 1050 720 1080 780 1220 770 1380 720 1440 620 1520 580 1540 690 1590 680 1600 600 1700 570 1840 600 1900 700 1960 690 1990 800 2110 810 2140 700 2180 600 2240 580 2320 470 2400 480V990ZM1060 590 1120 590 1110 650 1060 650ZM1750 500 1800 540 1790 570 1750 540Z" />
      <path fill="#d2e9cf" d="M1520 600 1600 610 1590 690 1540 680ZM2170 640 2200 650 2190 790 2160 780ZM1990 760 2130 740 2120 800 2030 810Z" />
    </g>
    <rect width="1869" height="276" filter="url(#relief)" opacity="0.22" />

    {/* seas */}
    <g transform={place(NORTH_SEA)} fill="#96cdf0" filter="url(#coast)">
      <path d="M275 60 262 130 240 155 250 180 190 210 260 200 305 225 340 270 350 330 375 395 430 435 470 490 497 555 475 560 508 600 514 635 500 660 530 650 575 650 612 665 634 700 630 750 600 805 570 822 545 850 560 875 608 870 595 900 585 960H640L680 915 745 882 790 875 800 850 780 850 830 800 870 760 885 690 895 640 940 605 990 590 1080 588 1110 550 1150 545 1175 575 1200 560 1215 530 1240 535 1290 545 1250 500 1225 485 1238 440 1232 400 1225 350 1205 300 1180 260 1180 200 1180 60Z" />
      <path d="M30 255 62 262 58 330 85 375 30 385ZM110 378 190 355 225 368 178 400 185 450 225 492 218 530 240 550 200 592 160 612 110 590 92 620 132 660 110 720 60 790 20 800V420L90 400ZM30 858 100 845 170 872 235 858 200 895 120 900 125 960H30Z" />
      <path d="M925 660 960 640 965 680 930 700 935 730 915 700ZM1190 60 1230 90 1210 120ZM1240 95 1290 90 1270 115Z" />
      <path d="M590 330 720 300 860 260 900 280 740 360 720 440 600 470Z" fill="#9fd2f2" />
      <path fill="#d5ebd7" d="M80 455 115 450 100 490 75 520ZM820 845 860 840 870 860 830 870ZM905 625 960 595 950 605 910 635ZM1050 575 1090 565 1090 570ZM1205 320 1212 350 1205 350Z" />
    </g>
    <g transform={place(BALTIC)} fill="#96cdf0" filter="url(#coast)">
      <path d="M-105 0-82 90-100 130-130 160-170 180-195 200-205 270-210 335-180 350-150 380-115 380-80 420-100 450-60 440 0 415 50 395 95 400 110 350 150 370 150 410 190 430 165 455 200 485 240 462 300 425 360 395 400 360 470 328 550 322 585 345 585 390 640 388 690 350 668 310 735 305 765 270 790 240 795 190 780 100 775 0H410L400 90 385 115 375 90 350 105 330 132 240 130 235 160 198 190 205 220 185 240 110 245 80 222 60 180 45 120 80 70 55 0Z" />
      <path fill="#c0e2c3" d="M-70 180-20 160 30 170 35 210 20 270-30 300-60 290-40 250-80 220ZM-190 215-140 200-110 230-115 280-150 290-180 260ZM235 258 270 262 278 285 262 298 238 280ZM-60 310 10 300 0 330-50 345ZM380 33 410 33 395 95 384 108Z" />
    </g>

    {/* rivers and lakes */}
    <g fill="none" stroke="#93cbf2" strokeLinejoin="round">
      <g transform={place(VOLGA)} filter="url(#coast)">
        <path strokeWidth="12" d="M-60 130 0 100 40 115 100 130 140 150 200 165 232 180 230 230 255 250" />
        <path strokeWidth="26" d="M300 240 250 262 222 300" />
        <path strokeWidth="18" d="M222 300 205 350 178 390" />
        <path strokeWidth="9" d="M300 240 370 235M500 155 570 165 600 190M178 395 230 460 215 505 240 525 300 530" />
        <path strokeWidth="16" d="M225 515 250 525M240 440 225 470M175 590 165 640 145 690M540 150 570 170" />
        <path strokeWidth="8" d="M330 565 260 560 190 575M140 700 90 735 0 775" />
        <path strokeWidth="3" d="M370 235 440 200 500 165M0 790 150 760 270 680 350 660M440 830 570 800 740 765 800 770 900 820 1000 850 1040 790 1070 720 1085 640 1070 560 1100 500 1090 420 1150 330 1208 220" />
      </g>
      <g transform={place(CENTRE)} filter="url(#coast)">
        <path strokeWidth="14" d="M1130 760 1100 800 1110 862" />
        <path strokeWidth="8" d="M1000 125 1060 115 1110 80 1150 110 1200 110M890 0 905 45" />
        <path strokeWidth="2" d="M910 115 1000 125M590 350 620 390 680 380 740 330 770 240M250 360 260 440 290 540M480 480 520 520 520 600M750 450 750 530 720 610M770 380 930 390 940 470 1000 500" />
      </g>
      <g transform={place(BALTIC)} strokeWidth="2">
        <path d="M800 180 850 280 960 290 1021 313M1150 40 1200 70 1240 120M520 640 600 620 700 670 775 694 800 740 870 860M0 700 60 740 110 790" />
        <path strokeWidth="10" d="M60 520 70 530M830 480 840 482M1320 98 1325 102" />
      </g>
      <g transform={place(BELARUS)}>
        <path strokeWidth="3" d="M1090 590 1030 650 1000 690M830 810 900 830M300 40 350 60 390 90" />
        <path strokeWidth="14" d="M745 830 742 862" />
      </g>
    </g>

    <g transform={place(NORTH_SEA)}><Roads d={northSeaRoads} /></g>
    <g transform={place(BALTIC)}><Roads d={balticRoads} /></g>
    <g transform={place(BELARUS)}><Roads d={belarusRoads} /></g>
    <g transform={place(CENTRE)}><Roads d={centreRoads} /></g>
    <g transform={place(VOLGA)}><Roads d={volgaRoads} /></g>

    <g fill="#3d78bd" fontFamily="Noto Sans, sans-serif" fontStyle="italic" textAnchor="middle">
      <text x="239" y="27" fontSize="8">Северное</text>
      <text x="239" y="37" fontSize="8">море</text>
      <text x="459" y="8" fontSize="7">Каттегат</text>
      <text x="884" y="14" fontSize="7" transform="rotate(38 884 14)">р. Даугава</text>
      <text x="514" y="242" fontSize="7" transform="rotate(52 514 242)">р. Эльба</text>
      <text x="1113" y="212" fontSize="7" transform="rotate(-48 1113 212)">р. Десна</text>
      <text x="1057" y="265" fontSize="7" transform="rotate(8 1057 265)">р. Десна</text>
      <text x="1329" y="88" fontSize="7" transform="rotate(88 1329 88)">р. Ока</text>
      <text x="1828" y="231" fontSize="7" transform="rotate(-80 1828 231)">р. Урал</text>
      <text x="1462" y="268" fontSize="7" transform="rotate(-85 1462 268)">Волга</text>
    </g>
    <g fill="#8a8f86" fontFamily="Noto Sans, sans-serif" fontStyle="italic" fontSize="8">
      <text x="426" y="239">Г</text><text x="436" y="243">а</text><text x="446" y="247">р</text><text x="457" y="251">ц</text>
      <text x="1788" y="124">У</text><text x="1793" y="112">р</text><text x="1796" y="101">а</text><text x="1800" y="90">л</text>
      <text x="1803" y="79">ь</text><text x="1806" y="67">с</text><text x="1819" y="15">г</text><text x="1822" y="4">о</text>
    </g>

    <Cities sheet={NORTH_SEA} cities={northSea} />
    <Cities sheet={BALTIC} cities={baltic} />
    <Cities sheet={BELARUS} cities={belarus} />
    <Cities sheet={CENTRE} cities={centre} />
    <Cities sheet={VOLGA} cities={volga} />

    {/* heat layer */}
    <g transform={place(BELARUS)} opacity="0.94">
      <path d={heatOutline} fill="#85bb5c" />
      <path d={heatOutline} fill="#edcb52" filter="url(#warm)" />
      <path d={heatOutline} fill="#f3986a" filter="url(#hot)" />
      <g filter="url(#soft)" fill="none" stroke="#ecc653" strokeWidth="26" strokeLinecap="round" strokeLinejoin="round">
        <path d={coolPaths} />
      </g>
      <g filter="url(#soft)" fill="#f8566f">
        {hotSpots.map(([x, y, r]) => <circle key={`${x}-${y}`} cx={x} cy={y} r={r} />)}
      </g>
      <g filter="url(#softer)" fill="none" strokeLinecap="round" strokeLinejoin="round">
        <path d={coolPaths} stroke="#e8cb55" strokeWidth="13" />
        <path d={coldPaths} stroke="#e3cc55" strokeWidth="36" />
      </g>
      <path d={coldPaths} stroke="#8fbf59" strokeWidth="15" fill="none" strokeLinecap="round" strokeLinejoin="round" filter="url(#softer)" />
    </g>
    <Cities sheet={BELARUS} cities={heatCities} hot />
    <Cities sheet={BELARUS} cities={overHeat} />
  </MapSvg>
);

function SelectFilter({ id, label }: { id: string; label: string }) {
  return (
    <FilterRow>
      <FilterLabel htmlFor={id}>{label}</FilterLabel>
      <Field>
        <Select id={id} defaultValue="">
          <option value="">Нет выбранных значений</option>
        </Select>
        <Chevron viewBox="0 0 8 8" fill="none" stroke="#333" strokeWidth="1.4" aria-hidden="true">
          <path d="M1 2.5 4 5.5 7 2.5" />
        </Chevron>
      </Field>
    </FilterRow>
  );
}

export default function App() {
  return (
    <>
      <GlobalStyle />
      <Page>
        <Content>
          <Header>
            <Logo href="#">Yandex DataLens<LogoTag>Public</LogoTag></Logo>
            <PageTitle>Анализ выигрышей рекламной игры Удача в придачу</PageTitle>
            <ShareButton type="button" aria-label="Поделиться">
              <svg width="13" height="13" viewBox="0 0 24 24" fill="none" stroke="currentColor" strokeWidth="2.2" strokeLinejoin="round" aria-hidden="true">
                <path d="M13 4v4C6.5 9 4 14 3 20c2-3 5-6 10-6v4l8-7z" />
              </svg>
            </ShareButton>
          </Header>

          <Board>
            <BoardRow $columns="411fr 880fr 568fr">
              <Indicator>
                <CornerMenu type="button" aria-label="Меню"><Dots /></CornerMenu>
                <IndicatorLabel>Количество выигрышных кодов</IndicatorLabel>
                <IndicatorValue>304 215 ед.</IndicatorValue>
              </Indicator>

              <Trend>
                <CornerMenu type="button" aria-label="Меню"><Dots /></CornerMenu>
                <TrendPlot viewBox="0 0 879 125" preserveAspectRatio="none" role="img" aria-label="Динамика">
                  <path d="M7 109.5H873" stroke="#e8e8e8" />
                  {Array.from({ length: 17 }, (_, i) => (
                    <path key={i} d={`M${Math.round(40 + i * 51.5)} 110v6`} stroke="#e8e8e8" />
                  ))}
                  <path
                    d="M15 108.5H118L144 106.5H581L607 31.5H660L700 31H737L762 57H841L865 54.5"
                    fill="none" stroke={BLUE} strokeWidth="1.3" strokeLinejoin="round"
                  />
                </TrendPlot>
              </Trend>

              <Filters>
                <FilterRow>
                  <FilterLabel htmlFor="round">Номер тура</FilterLabel>
                  <Field><TextInput id="round" type="text" /></Field>
                </FilterRow>
                <SelectFilter id="region" label="Регион победителя" />
                <SelectFilter id="prize" label="Наименование выигрыша" />
                <SelectFilter id="sex" label="Пол победителя" />
              </Filters>
            </BoardRow>

            <Card>
              <TitledHeader title="Количество выигрышей по регионам" />
              <MapBox>
                <RegionMap />
                <ZoomControl>
                  <ZoomButton type="button" aria-label="Приблизить">
                    <svg width="9" height="9" viewBox="0 0 9 9" stroke="currentColor" strokeWidth="2.5"><path d="M0 4.5h9M4.5 0v9" /></svg>
                  </ZoomButton>
                  <ZoomRail><ZoomHandle /></ZoomRail>
                  <ZoomButton type="button" aria-label="Отдалить">
                    <svg width="9" height="9" viewBox="0 0 9 9" stroke="currentColor" strokeWidth="2.5"><path d="M0 4.5h9" /></svg>
                  </ZoomButton>
                </ZoomControl>
                <Legend>
                  <LegendTitle>Геоточка</LegendTitle>
                  <LegendScale />
                  <LegendEnds><span>min</span><span>max</span></LegendEnds>
                </Legend>
              </MapBox>
            </Card>

            <BoardRow $columns="1fr 1fr">
              <Card>
                <TitledHeader title="Количество мелких призов" />
                <ChartBody $labels={137} $height={292}>
                  <BarChart bars={smallPrizes} max={105000} ticks={smallTicks} first={12} last={258} thickness={11} />
                </ChartBody>
              </Card>
              <Card>
                <TitledHeader title="Количество нематериальных призов" />
                <ChartBody $labels={250} $height={292}>
                  <BarChart bars={bigPrizes} max={1050} ticks={bigTicks} first={4} last={266} thickness={4} />
                </ChartBody>
              </Card>
            </BoardRow>

            <BoardRow $columns="881fr 983fr">
              <Card>
                <TitledHeader title="Соотношение выигравших по полу" />
                <ChartBody $labels={0} $height={260}>
                  <Plot role="img" aria-label="Пол победителей">
                    <text x="424" y="14" fill="#555" fontWeight="600" textAnchor="middle">1%</text>
                    <path d="M436 8q4 3 4 14" fill="none" stroke="#8fc46a" />
                    <path d="M439 14l1 10" fill="none" stroke="#f0b04c" />
                  </Plot>
                </ChartBody>
              </Card>
              <Card>
                <TitledHeader title="Распределение победителей по месту жительства" />
                <ChartBody $labels={33} $height={260}>
                  <Plot role="img" aria-label="Место жительства">
                    <text x="-8" y="2" fill="#686868" textAnchor="end">200k</text>
                    <line x1="0" x2="100%" y1="0" y2="0" stroke="#e8e8e8" />
                    {["16.67%", "50%", "83.33%"].map((x) => (
                      <line key={x} x1={x} x2={x} y1="0" y2="230" stroke="#e8e8e8" />
                    ))}
                    <svg x="16.67%" overflow="visible"><rect x="-15" y="12" width="30" height="218" fill={BLUE} /></svg>
                  </Plot>
                </ChartBody>
              </Card>
            </BoardRow>
          </Board>
        </Content>
        <Track><Thumb /></Track>
      </Page>
    </>
  );
}
